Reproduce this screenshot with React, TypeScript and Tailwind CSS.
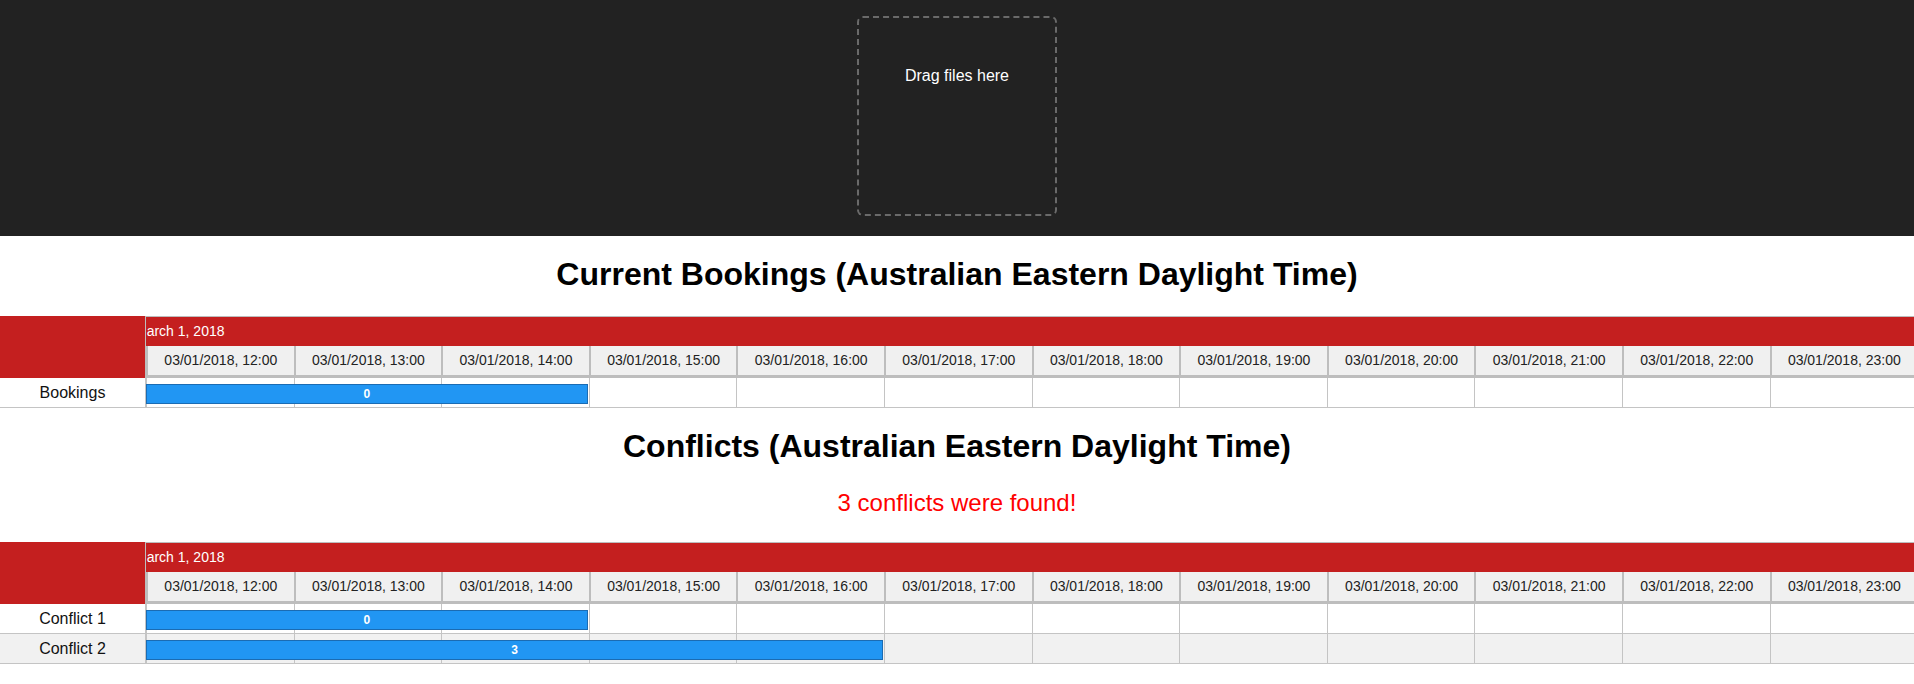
const hours = ["12:00", "13:00", "14:00", "15:00", "16:00", "17:00", "18:00", "19:00", "20:00", "21:00", "22:00", "23:00"];

type Row = { label: string; span: number; value: string; shaded?: boolean };

const Gantt = ({ rows }: { rows: Row[] }) => {
    return (
        <div className="w-full overflow-hidden">
            <div className="flex">
                <div className="w-[146px] shrink-0 bg-[#c41f1f] border-r border-[#bdbdbd]"></div>
                <div className="flex-1 min-w-0 overflow-hidden border-t border-[#bdbdbd]">
                    {/* date label is scrolled, so its first letter sits under the left column */}
                    <div className="h-[29px] bg-[#c41f1f] overflow-hidden whitespace-nowrap">
                        <span className="block -ml-[11px] text-[14px] leading-[29px] text-white">March 1, 2018</span>
                    </div>
                    <div className="flex border-b-[3px] border-[#bdbdbd]">
                        {hours.map((h) => (
                            <div key={h} className="w-[147.6px] shrink-0 h-[29px] bg-[#f0f0f0] border-l-2 border-[#bdbdbd] text-center text-[14px] leading-[29px] text-[#222] whitespace-nowrap">
                                03/01/2018, {h}
                            </div>
                        ))}
                    </div>
                </div>
            </div>
            {rows.map((r) => (
                <div key={r.label} className={`flex h-[30px] border-b border-[#c4c4c4] ${r.shaded ? "bg-[#f1f1f1]" : "bg-white"}`}>
                    <div className="w-[146px] shrink-0 border-r border-[#c4c4c4] text-center text-[16px] leading-[29px] text-[#111]">{r.label}</div>
                    <div className="relative flex flex-1 min-w-0 overflow-hidden">
                        {hours.map((h) => (
                            <div key={h} className="w-[147.6px] shrink-0 border-l border-[#c4c4c4]"></div>
                        ))}
                        <div
                            className="absolute left-0 top-[6px] h-[20px] bg-[#2196f3] border border-[#1b6cb3] text-center text-[12px] font-bold leading-[18px] text-white"
                            style={{ width: r.span * 147.6 - 1 }}
                        >
                            {r.value}
                        </div>
                    </div>
                </div>
            ))}
        </div>
    );
};

const App = () => {
    return (
        <div className="w-full h-[684px] overflow-hidden bg-white font-['Liberation_Sans',Arial,sans-serif]">
            <header className="h-[236px] bg-[#222222] pt-[16px] flex justify-center">
                <div className="w-[200px] h-[200px] border-2 border-dashed border-[#6a6a6a] rounded-[6px] pt-[49px] text-center text-[16px] leading-[18px] text-white">
                    Drag files here
                </div>
            </header>

            <h1 className="h-[80px] pt-[20px] text-center text-[32px] font-bold leading-[37px] text-black">Current Bookings (Australian Eastern Daylight Time)</h1>
            <Gantt rows={[{ label: "Bookings", span: 3, value: "0" }]} />

            <h1 className="h-[80px] pt-[20px] text-center text-[32px] font-bold leading-[37px] text-black">Conflicts (Australian Eastern Daylight Time)</h1>
            <p className="pt-[1px] pb-[25px] text-center text-[24px] leading-[28px] text-[#ff0000]">3 conflicts were found!</p>
            <Gantt
                rows={[
                    { label: "Conflict 1", span: 3, value: "0" },
                    { label: "Conflict 2", span: 5, value: "3", shaded: true },
                ]}
            />
        </div>
    );
};

export default App;
